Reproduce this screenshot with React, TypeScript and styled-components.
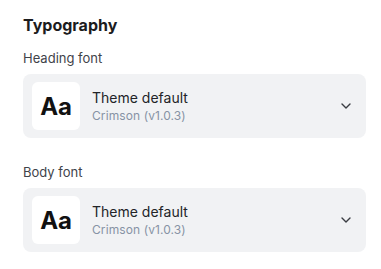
import React from "react";
import styled, { createGlobalStyle } from "styled-components";

const Global = createGlobalStyle`
  html, body { margin: 0; padding: 0; background: #ffffff; }
  body { font-family: Inter, "Noto Sans", sans-serif; -webkit-font-smoothing: antialiased; }
`;

const Panel = styled.div`
  width: 381px;
  height: 269px;
  box-sizing: border-box;
  padding: 13px 15px 0 23px;
  display: flex;
  flex-direction: column;
  background: #fff;
`;

const Title = styled.h2`
  margin: 0;
  font-size: 16px;
  line-height: 24px;
  font-weight: 700;
  color: #1c1c1e;
`;

const Section = styled.div<{ $top: number }>`
  display: flex;
  flex-direction: column;
  gap: 7px;
  margin-top: ${(p) => p.$top}px;
`;

const Label = styled.div`
  font-size: 13px;
  line-height: 18px;
  padding-top: 1px;
  color: #3f434a;
`;

const Select = styled.button`
  all: unset;
  box-sizing: border-box;
  width: 343px;
  height: 64px;
  border-radius: 8px;
  background: #f1f2f4;
  padding: 8px 12px 8px 9px;
  display: flex;
  align-items: center;
  gap: 12px;
  cursor: pointer;
`;

const Preview = styled.div`
  width: 48px;
  height: 48px;
  border-radius: 6px;
  background: #ffffff;
  display: flex;
  align-items: center;
  justify-content: center;
  font-size: 24px;
  font-weight: 700;
  color: #111;
  letter-spacing: -0.2px;
`;

const Info = styled.div`
  flex: 1;
  display: flex;
  flex-direction: column;
  gap: 1px;
`;

const Name = styled.div`
  font-size: 14px;
  line-height: 18px;
  color: #222428;
`;

const Sub = styled.div`
  font-size: 12px;
  line-height: 16px;
  letter-spacing: 0.1px;
  color: #8792a5;
`;

const Chevron = () => (
  <svg width="16" height="16" viewBox="0 0 16 16" fill="none">
    <path d="M4 6l4 4 4-4" stroke="#3a3d42" strokeWidth="1.4" strokeLinecap="round" strokeLinejoin="round" />
  </svg>
);

const FontSelect = ({ label, top }: { label: string; top: number }) => (
  <Section $top={top}>
    <Label>{label}</Label>
    <Select>
      <Preview>Aa</Preview>
      <Info>
        <Name>Theme default</Name>
        <Sub>Crimson (v1.0.3)</Sub>
      </Info>
      <Chevron />
    </Select>
  </Section>
);

export default function App() {
  return (
    <>
      <Global />
      <Panel>
        <Title>Typography</Title>
        <FontSelect label="Heading font" top={11} />
        <FontSelect label="Body font" top={24} />
      </Panel>
    </>
  );
}
